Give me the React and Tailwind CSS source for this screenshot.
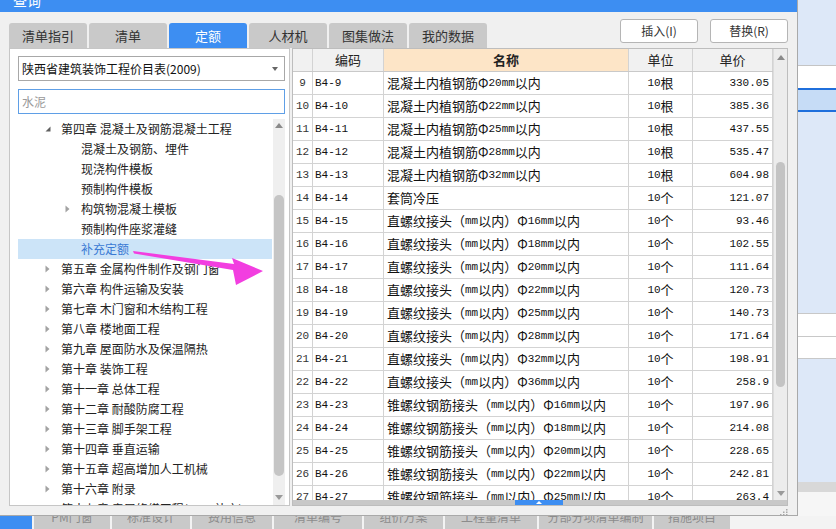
const cjk = "font-['Noto_Sans_CJK_SC',sans-serif]";
const mono = "font-['Liberation_Mono',monospace]";

const tabs = ["清单指引", "清单", "定额", "人材机", "图集做法", "我的数据"];

const tree = [
  { lv: 0, t: "第四章 混凝土及钢筋混凝土工程", ex: "open" },
  { lv: 1, t: "混凝土及钢筋、埋件" },
  { lv: 1, t: "现浇构件模板" },
  { lv: 1, t: "预制构件模板" },
  { lv: 1, t: "构筑物混凝土模板", ex: "closed" },
  { lv: 1, t: "预制构件座浆灌缝" },
  { lv: 1, t: "补充定额", sel: true },
  { lv: 0, t: "第五章 金属构件制作及钢门窗", ex: "closed" },
  { lv: 0, t: "第六章 构件运输及安装", ex: "closed" },
  { lv: 0, t: "第七章 木门窗和木结构工程", ex: "closed" },
  { lv: 0, t: "第八章 楼地面工程", ex: "closed" },
  { lv: 0, t: "第九章 屋面防水及保温隔热", ex: "closed" },
  { lv: 0, t: "第十章 装饰工程", ex: "closed" },
  { lv: 0, t: "第十一章 总体工程", ex: "closed" },
  { lv: 0, t: "第十二章 耐酸防腐工程", ex: "closed" },
  { lv: 0, t: "第十三章 脚手架工程", ex: "closed" },
  { lv: 0, t: "第十四章 垂直运输", ex: "closed" },
  { lv: 0, t: "第十五章 超高增加人工机械", ex: "closed" },
  { lv: 0, t: "第十六章 附录", ex: "closed" },
  { lv: 0, t: "第十七章 房屋修缮工程(2014补充)", ex: "closed" },
];

const zhi = "直螺纹接头（mm以内）Φ";
const zhui = "锥螺纹钢筋接头（mm以内）Φ";
const rows = [
  [9, "B4-9", "混凝土内植钢筋Φ20mm以内", "10根", "330.05"],
  [10, "B4-10", "混凝土内植钢筋Φ22mm以内", "10根", "385.36"],
  [11, "B4-11", "混凝土内植钢筋Φ25mm以内", "10根", "437.55"],
  [12, "B4-12", "混凝土内植钢筋Φ28mm以内", "10根", "535.47"],
  [13, "B4-13", "混凝土内植钢筋Φ32mm以内", "10根", "604.98"],
  [14, "B4-14", "套筒冷压", "10个", "121.07"],
  [15, "B4-15", zhi + "16mm以内", "10个", "93.46"],
  [16, "B4-16", zhi + "18mm以内", "10个", "102.55"],
  [17, "B4-17", zhi + "20mm以内", "10个", "111.64"],
  [18, "B4-18", zhi + "22mm以内", "10个", "120.73"],
  [19, "B4-19", zhi + "25mm以内", "10个", "140.73"],
  [20, "B4-20", zhi + "28mm以内", "10个", "171.64"],
  [21, "B4-21", zhi + "32mm以内", "10个", "198.91"],
  [22, "B4-22", zhi + "36mm以内", "10个", "258.9"],
  [23, "B4-23", zhui + "16mm以内", "10个", "197.96"],
  [24, "B4-24", zhui + "18mm以内", "10个", "214.08"],
  [25, "B4-25", zhui + "20mm以内", "10个", "228.65"],
  [26, "B4-26", zhui + "22mm以内", "10个", "242.81"],
  [27, "B4-27", zhui + "25mm以内", "10个", "263.4"],
];

const taskTabs = [
  [32, ""],
  [76, "PM门窗"],
  [78, "标准设计"],
  [80, "费用信息"],
  [88, "清单编号"],
  [79, "组价方案"],
  [92, "工程量清单"],
  [113, "分部分项清单编制"],
  [76, "措施项目"],
];

const Mixed = ({ text }) =>
  text
    .split(/([\x20-\x7E]+)/)
    .filter(Boolean)
    .map((part, i) =>
      /^[\x20-\x7E]+$/.test(part) ? (
        <span key={i} className={`${mono} text-[11px]`}>
          {part}
        </span>
      ) : (
        <span key={i}>{part}</span>
      )
    );

const Expander = ({ kind }) =>
  kind === "open" ? (
    <svg width="6" height="6" viewBox="0 0 6 6">
      <polygon points="5.5,0.5 5.5,5.5 0.5,5.5" fill="#606060" />
    </svg>
  ) : (
    <svg width="5" height="8" viewBox="0 0 5 8">
      <polygon points="0.5,0.5 4.5,4 0.5,7.5" fill="#a2a2a2" />
    </svg>
  );

const UpArrow = ({ color = "#8a8a8a" }) => (
  <svg width="8" height="5" viewBox="0 0 8 5">
    <polygon points="0,5 4,0 8,5" fill={color} />
  </svg>
);

const DownArrow = ({ color = "#8a8a8a" }) => (
  <svg width="8" height="5" viewBox="0 0 8 5">
    <polygon points="0,0 4,5 8,0" fill={color} />
  </svg>
);

const LeftPanel = () => (
  <div className="w-[281px] h-full flex flex-col bg-white border border-[#c6c6c6] pl-[8px] pr-[4px] pt-[7px]">
    <div className="h-[25px] border border-[#a8a8a8] flex items-center justify-between pl-[3px] pr-[6px] text-[12px] text-[#111]">
      <span>陕西省建筑装饰工程价目表(2009)</span>
      <svg width="6" height="4" viewBox="0 0 6 4">
        <polygon points="0,0 3,4 6,0" fill="#666" />
      </svg>
    </div>
    <div className="mt-[8px] h-[25px] border border-[#5f9fe6] flex items-center pl-[3px] text-[12px] text-[#9a9a9a]">
      水泥
    </div>
    <div className="mt-[5px] flex-1 flex min-h-0 overflow-hidden">
      <div className="w-[254px] flex flex-col">
        {tree.map((n, i) => (
          <div
            key={i}
            className={`h-[20px] shrink-0 flex items-center ${n.sel ? "bg-[#cce4f8] text-[#3a7ad4]" : "text-[#222]"}`}
          >
            <div className={`${n.lv === 0 ? "w-[43px] pl-[27px]" : "w-[63px] pl-[47px]"} flex items-center`}>
              {n.ex && <Expander kind={n.ex} />}
            </div>
            <span className="whitespace-nowrap text-[12px]">{n.t}</span>
          </div>
        ))}
      </div>
      <div className="ml-[1px] w-[12px] h-full flex flex-col items-center bg-[#efefef]">
        <div className="h-[12px] w-full flex items-center justify-center">
          <UpArrow />
        </div>
        <div className="h-[64px] shrink-0" />
        <div className="h-[281px] w-[10px] shrink-0 rounded-[5px] bg-[#c5c5c5]" />
        <div className="flex-1" />
        <div className="h-[16px] w-full flex items-center justify-center">
          <DownArrow color="#9a9a9a" />
        </div>
      </div>
    </div>
  </div>
);

const cols = "grid grid-cols-[20px_71px_245px_64px_80px]";
const cell = "border-r border-[#d3d3d3] flex items-center";

const Table = () => (
  <div className="w-[496px] h-full flex flex-col bg-white border border-[#bdbdbd]">
    <div className="flex-1 flex min-h-0">
      <div className="w-[480px] flex flex-col overflow-hidden">
        <div className={`${cols} h-[23px] shrink-0 border-b border-[#c9c9c9] bg-[#f1f1f1] text-[13px] text-[#222]`}>
          <div className={cell} />
          <div className={`${cell} justify-center`}>编码</div>
          <div className={`${cell} justify-center bg-[#fde5c7] font-bold`}>名称</div>
          <div className={`${cell} justify-center`}>单位</div>
          <div className={`${cell} justify-center`}>单价</div>
        </div>
        {rows.map((r) => (
          <div key={r[0]} className={`${cols} h-[23px] shrink-0 border-b border-[#d3d3d3] text-[13px] text-[#111]`}>
            <div className={`${cell} justify-center ${mono} text-[11px] text-[#333]`}>{r[0]}</div>
            <div className={`${cell} pl-[2px] ${mono} text-[11px]`}>{r[1]}</div>
            <div className={`${cell} pl-[3px] whitespace-nowrap overflow-hidden`}>
              <Mixed text={r[2]} />
            </div>
            <div className={`${cell} justify-center`}>
              <Mixed text={r[3]} />
            </div>
            <div className={`${cell} justify-end pr-[3px] ${mono} text-[11px]`}>{r[4]}</div>
          </div>
        ))}
      </div>
      <div className="w-[14px] h-full flex flex-col items-center bg-[#ececec] border-l border-[#dcdcdc]">
        <div className="h-[16px] w-full flex items-center justify-center">
          <UpArrow />
        </div>
        <div className="h-[97px] shrink-0" />
        <div className="h-[225px] w-[9px] shrink-0 rounded-[5px] bg-[#c3c3c3]" />
        <div className="flex-1" />
        <div className="h-[14px] w-full flex items-center justify-center">
          <DownArrow color="#9a9a9a" />
        </div>
      </div>
    </div>
    <div className="h-[5px] shrink-0 bg-[#c8c8c8] flex">
      <div className="ml-[222px] w-[48px] h-full bg-[#3d8ef2] flex items-center justify-center">
        <svg width="6" height="3" viewBox="0 0 6 3">
          <polygon points="0,3 3,0 6,3" fill="#ffffff" />
        </svg>
      </div>
    </div>
  </div>
);

const Dialog = () => (
  <div className="w-[798px] h-full flex flex-col bg-[#f0f0f0] border-r border-b border-[#a9a9a9]">
    <div className="h-[12px] shrink-0 bg-[#3d8ef2] overflow-hidden pl-[13px]">
      <span className="block -mt-[10px] text-[14px] text-white">查询</span>
    </div>
    <div className="flex-1 flex flex-col pl-[9px] pr-[9px]">
      <div className="h-[36px] shrink-0 flex justify-between">
        <div className="flex items-end gap-[2px]">
          {tabs.map((t) => (
            <div
              key={t}
              className={`w-[78px] h-[25px] rounded-t-[3px] flex items-center justify-center text-[13px] ${
                t === "定额" ? "bg-[#3d8ef2] text-white" : "bg-[#c9c9c9] text-[#333]"
              }`}
            >
              {t}
            </div>
          ))}
        </div>
        <div className="flex gap-[12px] pt-[7px]">
          {["插入(I)", "替换(R)"].map((b) => (
            <div
              key={b}
              className="w-[78px] h-[24px] rounded-[3px] bg-white border border-[#b5b5b5] flex items-center justify-center text-[12px] text-[#333]"
            >
              {b}
            </div>
          ))}
        </div>
      </div>
      <div className="h-[458px] shrink-0 flex gap-[2px]">
        <LeftPanel />
        <Table />
      </div>
      <div className="flex-1 flex justify-end items-center">
        <svg width="8" height="8" viewBox="0 0 8 8">
          <rect x="6" y="2" width="1.5" height="1.5" fill="#a8a8a8" />
          <rect x="3" y="4.5" width="1.5" height="1.5" fill="#a8a8a8" />
          <rect x="6" y="4.5" width="1.5" height="1.5" fill="#a8a8a8" />
          <rect x="0" y="7" width="1.5" height="1" fill="#a8a8a8" />
          <rect x="3" y="7" width="1.5" height="1" fill="#a8a8a8" />
          <rect x="6" y="7" width="1.5" height="1" fill="#a8a8a8" />
        </svg>
      </div>
    </div>
  </div>
);

const RightStrip = () => (
  <div className="flex-1 h-full flex flex-col">
    <div className="h-[65px] shrink-0 bg-[#dde8f8]" />
    <div className="h-[23px] shrink-0 bg-white border-t border-[#c4c4c4]" />
    <div className="h-[2px] shrink-0 bg-[#1f6fdc]" />
    <div className="h-[20px] shrink-0 bg-[#c6dcf6]" />
    <div className="h-[2px] shrink-0 bg-[#1f6fdc]" />
    <div className="h-[201px] shrink-0 bg-[#dde8f8]" />
    <div className="h-[23px] shrink-0 bg-white border-t border-[#c8c8c8]" />
    <div className="h-[23px] shrink-0 bg-white border-t border-b border-[#c8c8c8]" />
    <div className="h-[123px] shrink-0 bg-[#dde8f8]" />
    <div className="h-[10px] shrink-0 bg-[#d8d8d8]" />
    <div className="flex-1 bg-[#f6f6f6]" />
  </div>
);

const Taskbar = () => (
  <div className="h-[13px] flex gap-[2px] bg-[#f3f3f3] overflow-hidden">
    {taskTabs.map(([w, t], i) => (
      <div
        key={i}
        style={{ width: w }}
        className={`h-full shrink-0 overflow-hidden flex justify-center ${i === 0 ? "bg-[#3d8ef2]" : "bg-[#c9c9c9]"}`}
      >
        <span className="block -mt-[6px] text-[12px] leading-[14px] text-[#8c8c8c] whitespace-nowrap">{t}</span>
      </div>
    ))}
  </div>
);

export default function App() {
  return (
    <div className={`relative w-[836px] h-[529px] overflow-hidden bg-[#f3f3f3] ${cjk} text-[12px] text-[#222]`}>
      <div className="h-[516px] flex">
        <Dialog />
        <RightStrip />
      </div>
      <Taskbar />
      <svg className="absolute top-0 left-0 pointer-events-none" width="836" height="529" viewBox="0 0 836 529">
        <polygon
          points="133,251 134,253.5 233,270 236,285 263,271 232,258 234,264"
          fill="#f23ee0"
        />
      </svg>
    </div>
  );
}
